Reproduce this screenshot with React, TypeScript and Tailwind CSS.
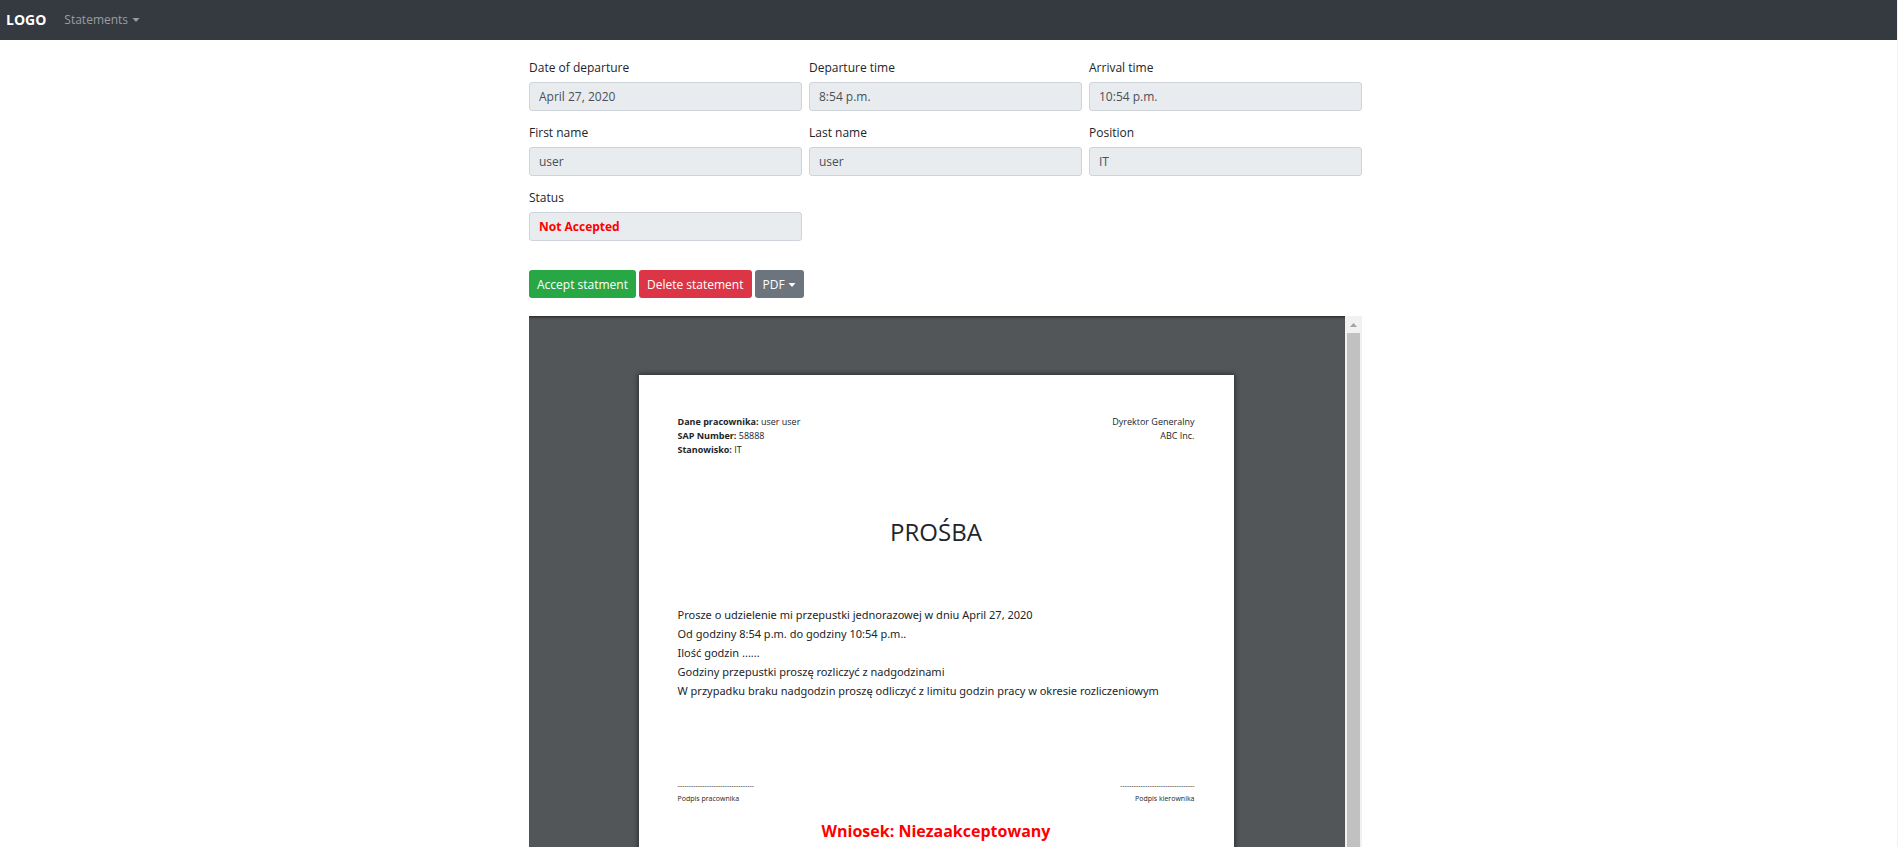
import React from "react";

type Field = { id: string; label: string; value: string; alert?: boolean };

const fields: Field[] = [
  { id: "departure-date", label: "Date of departure", value: "April 27, 2020" },
  { id: "departure-time", label: "Departure time", value: "8:54 p.m." },
  { id: "arrival-time", label: "Arrival time", value: "10:54 p.m." },
  { id: "first-name", label: "First name", value: "user" },
  { id: "last-name", label: "Last name", value: "user" },
  { id: "position", label: "Position", value: "IT" },
  { id: "status", label: "Status", value: "Not Accepted", alert: true },
];

const requestLines = [
  "Prosze o udzielenie mi przepustki jednorazowej w dniu April 27, 2020",
  "Od godziny 8:54 p.m. do godziny 10:54 p.m..",
  "Ilość godzin ......",
  "Godziny przepustki proszę rozliczyć z nadgodzinami",
  "W przypadku braku nadgodzin proszę odliczyć z limitu godzin pracy w okresie rozliczeniowym",
];

function Caret() {
  return (
    <svg viewBox="0 0 8 4" className="h-1 w-2 fill-current" aria-hidden="true">
      <path d="M0.5 0h7L4 4z" />
    </svg>
  );
}

function Navbar() {
  return (
    <nav className="flex h-10 shrink-0 items-center gap-[18px] bg-[#343a40] px-1.5 text-xs">
      <a href="#" className="text-sm font-bold text-white">LOGO</a>
      <button type="button" className="flex items-center gap-1 text-[#9a9da0]">
        Statements
        <Caret />
      </button>
    </nav>
  );
}

function ReadOnlyField({ id, label, value, alert }: Field) {
  return (
    <div className="flex flex-col gap-1.5">
      <label htmlFor={id} className="leading-4">{label}</label>
      <input
        id={id}
        readOnly
        value={value}
        className={`h-[29px] w-full rounded-[3px] border border-[#ced4da] bg-[#e9ecef] px-[9px] outline-none ${
          alert ? "font-bold text-[#ff0000]" : "text-[#495057]"
        }`}
      />
    </div>
  );
}

function Paper() {
  return (
    <article className="w-[595px] bg-white px-[39px] pt-10 pb-20 text-[#212529] shadow-[0_0_5px_1px_rgba(0,0,0,0.45)]">
      <header className="flex justify-between text-[9px] leading-[14px]">
        <div>
          <p><b>Dane pracownika:</b> user user</p>
          <p><b>SAP Number:</b> 58888</p>
          <p><b>Stanowisko:</b> IT</p>
        </div>
        <div className="text-right">
          <p>Dyrektor Generalny</p>
          <p>ABC Inc.</p>
        </div>
      </header>
      <h1 className="mt-[59px] text-center text-2xl">PROŚBA</h1>
      <div className="mt-[57px] font-['Noto_Sans',sans-serif] text-[11px] leading-[19px] whitespace-nowrap">
        {requestLines.map((line) => (
          <p key={line}>{line}</p>
        ))}
      </div>
      <div className="mt-[79px] flex justify-between text-[7px] leading-[13px]">
        <div>
          <p>----------------------------------</p>
          <p>Podpis pracownika</p>
        </div>
        <div className="text-right">
          <p>---------------------------------</p>
          <p>Podpis kierownika</p>
        </div>
      </div>
      <p className="mt-3.5 text-center text-base font-bold text-[#ff0000]">Wniosek: Niezaakceptowany</p>
    </article>
  );
}

function DocumentViewer() {
  return (
    <section aria-label="PDF" className="mt-[18px] flex min-h-0 flex-1">
      <div className="flex flex-1 items-start justify-center overflow-hidden bg-[#525659] pt-[59px] pr-0.5 shadow-[inset_0_3px_3px_-2px_rgba(0,0,0,0.6)]">
        <Paper />
      </div>
      <div className="flex w-[17px] flex-col items-center bg-[#f1f1f1]">
        <div className="flex h-[17px] shrink-0 items-center justify-center text-[#a3a3a3]">
          <svg viewBox="0 0 7 4" className="h-1 w-[7px] fill-current" aria-hidden="true">
            <path d="M0 4L3.5 0L7 4z" />
          </svg>
        </div>
        <div className="w-[13px] flex-1 bg-[#c1c1c1]" />
      </div>
    </section>
  );
}

export default function App() {
  return (
    <div className="flex h-screen flex-col overflow-hidden border-r border-[#f1f1f1] bg-white font-['Open_Sans','Noto_Sans',sans-serif] text-xs text-[#212529]">
      <Navbar />
      <main className="flex min-h-0 flex-1 flex-col items-center pt-5 pr-1.5">
        <div className="flex min-h-0 w-full max-w-[833px] flex-1 flex-col">
          <form className="grid grid-cols-3 gap-x-[7px] gap-y-[14px]">
            {fields.map((field) => (
              <ReadOnlyField key={field.id} {...field} />
            ))}
          </form>
          <div className="mt-[29px] flex h-7 gap-[3px] text-white">
            <button type="button" className="rounded-[3px] bg-[#28a745] px-2 pt-px">Accept statment</button>
            <button type="button" className="rounded-[3px] bg-[#dc3545] px-2 pt-px">Delete statement</button>
            <button type="button" className="flex items-center gap-[3px] rounded-[3px] bg-[#6c757d] px-2 pt-px">
              PDF
              <Caret />
            </button>
          </div>
          <DocumentViewer />
        </div>
      </main>
    </div>
  );
}
